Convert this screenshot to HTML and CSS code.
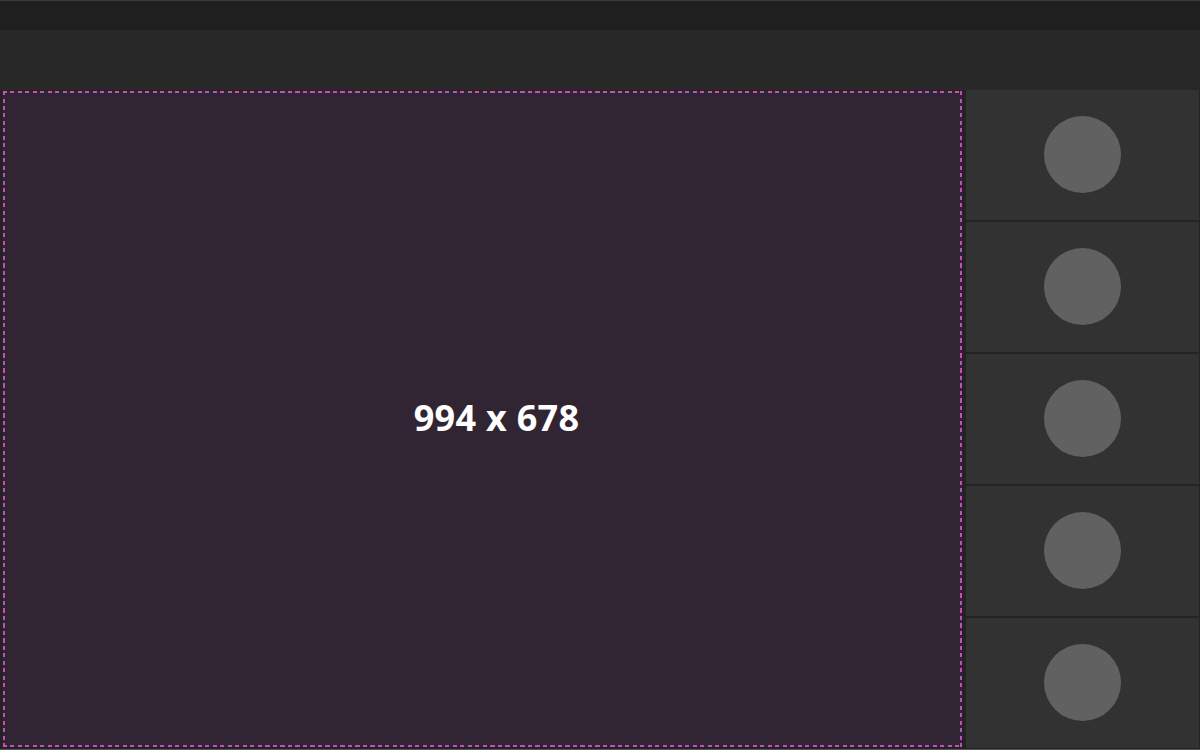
FILE: index.html
```html
<!DOCTYPE html>
<html>
<head>
<meta charset="utf-8">
<link rel="stylesheet" href="styles.css">
</head>
<body>
<div class="app">
  <div class="titlebar"></div>
  <div class="toolbar"></div>
  <div class="main">
    <div class="stage">
      <div class="canvas"><span class="size">994 x 678</span></div>
    </div>
    <div class="side">
      <div class="tile"><div class="dot"></div></div>
      <div class="tile"><div class="dot"></div></div>
      <div class="tile"><div class="dot"></div></div>
      <div class="tile"><div class="dot"></div></div>
      <div class="tile"><div class="dot"></div></div>
    </div>
  </div>
  <div class="bottomline"></div>
</div>
</body>
</html>
```
FILE: styles.css
```css
html, body {
  margin: 0;
  padding: 0;
  background: #232323;
  font-family: "Open Sans", "Noto Sans", sans-serif;
}
.app {
  width: 1200px;
  height: 750px;
  display: flex;
  flex-direction: column;
  overflow: hidden;
}
.titlebar {
  height: 29px;
  border-top: 1px solid #3c3c3c;
  background: #1f1f1f;
}
.toolbar {
  height: 60px;
  background: #282828;
}
.main {
  height: 659px;
  display: flex;
  background: #232323;
}
.stage {
  width: 966px;
  padding: 1px 4px 2px 3px;
  box-sizing: border-box;
  display: flex;
}
.canvas {
  flex: 1;
  display: flex;
  align-items: center;
  justify-content: center;
  padding-left: 28px;
  padding-bottom: 4px;
  background:
    repeating-linear-gradient(90deg, #c84cbd 0 4px, transparent 4px 7.5px) left top / 100% 2px no-repeat,
    repeating-linear-gradient(90deg, #c84cbd 0 4px, transparent 4px 7.5px) left bottom / 100% 2px no-repeat,
    repeating-linear-gradient(180deg, #c84cbd 0 4px, transparent 4px 7.5px) left top / 2px 100% no-repeat,
    repeating-linear-gradient(180deg, #c84cbd 0 4px, transparent 4px 7.5px) right top / 2px 100% no-repeat,
    #322533;
}
.size {
  color: #ffffff;
  font-weight: 700;
  font-size: 36px;
  letter-spacing: 0.3px;
}
.side {
  width: 233px;
  display: flex;
  flex-direction: column;
  gap: 2px;
}
.tile {
  height: 130px;
  box-sizing: border-box;
  padding-bottom: 2px;
  background: #323232;
  display: flex;
  align-items: center;
  justify-content: center;
}
.dot {
  width: 77px;
  height: 77px;
  border-radius: 50%;
  background: #616161;
}
.bottomline {
  height: 1px;
  background: #555555;
}
```
